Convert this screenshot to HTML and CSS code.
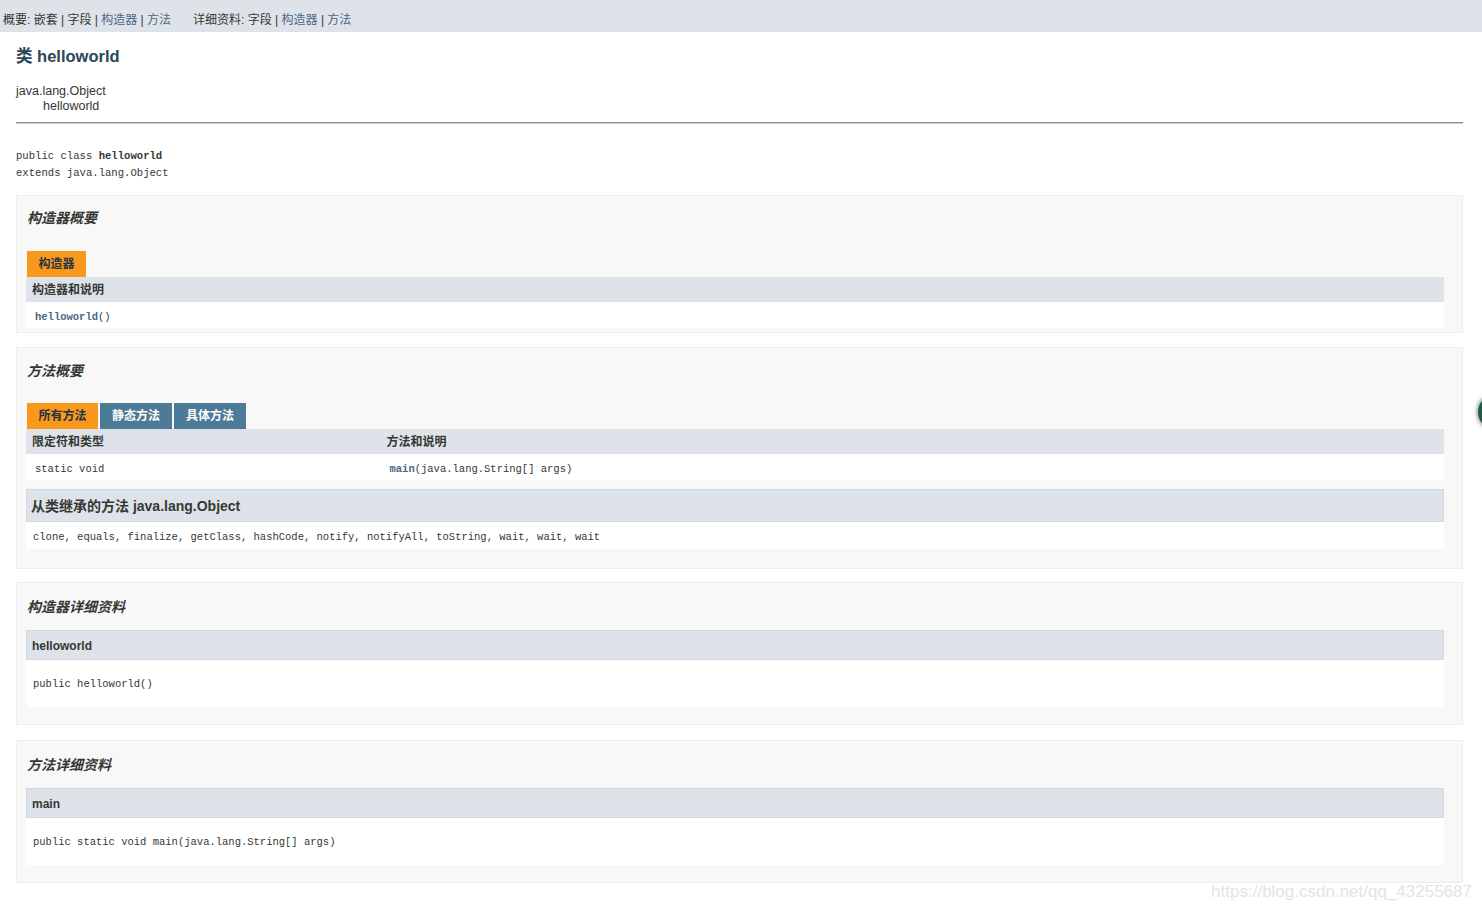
FILE: index.html
```html
<!DOCTYPE html>
<html lang="zh-CN">
<head>
<meta charset="utf-8">
<title>helloworld</title>
<link rel="stylesheet" href="styles.css">
</head>
<body>
<div class="subnav">
  <span class="navgroup">概要:&nbsp;嵌套&nbsp;|&nbsp;字段&nbsp;|&nbsp;<a class="link">构造器</a>&nbsp;|&nbsp;<a class="link">方法</a></span>
  <span class="navgroup">详细资料:&nbsp;字段&nbsp;|&nbsp;<a class="link">构造器</a>&nbsp;|&nbsp;<a class="link">方法</a></span>
</div>
<div class="content">
  <h2 class="title">类 helloworld</h2>
  <div class="inherit">
    <div>java.lang.Object</div>
    <div class="child">helloworld</div>
  </div>
  <div class="rule"></div>
  <pre class="decl">public class <b>helloworld</b>
extends java.lang.Object</pre>

  <section class="block summary">
    <h3>构造器概要</h3>
    <div class="tabs"><span class="tab active">构造器</span></div>
    <div class="table one">
      <div class="th">构造器和说明</div>
      <div class="td"><span class="code"><b class="link">helloworld</b>()</span></div>
    </div>
  </section>

  <section class="block summary methods">
    <h3>方法概要</h3>
    <div class="tabs">
      <span class="tab active">所有方法</span>
      <span class="tab">静态方法</span>
      <span class="tab">具体方法</span>
    </div>
    <div class="table two">
      <div class="th">限定符和类型</div>
      <div class="th">方法和说明</div>
      <div class="td"><span class="code">static void</span></div>
      <div class="td"><span class="code"><b class="link">main</b>(java.lang.String[] args)</span></div>
    </div>
    <div class="inherited">
      <h4 class="inh-head">从类继承的方法 java.lang.Object</h4>
      <div class="inh-body"><span class="code">clone, equals, finalize, getClass, hashCode, notify, notifyAll, toString, wait, wait, wait</span></div>
    </div>
  </section>

  <section class="block detail">
    <h3>构造器详细资料</h3>
    <h4 class="det-head">helloworld</h4>
    <div class="det-body"><pre class="code">public helloworld()</pre></div>
  </section>

  <section class="block detail last">
    <h3>方法详细资料</h3>
    <h4 class="det-head">main</h4>
    <div class="det-body"><pre class="code">public static void main(java.lang.String[] args)</pre></div>
  </section>
</div>
<div class="widget"></div>
<div class="watermark">https://blog.csdn.net/qq_43255687</div>
</body>
</html>
```
FILE: styles.css
```css
html, body {
  margin: 0;
  padding: 0;
}
body {
  position: relative;
  height: 910px;
  overflow: hidden;
  background: #ffffff;
  color: #353833;
  font-family: "Liberation Sans", "Noto Sans CJK SC", sans-serif;
  font-size: 12px;
}
.link {
  color: #4a6782;
  text-decoration: none;
}
.subnav {
  box-sizing: border-box;
  height: 32px;
  padding: 13px 0 0 3px;
  background: #dee3e9;
  display: flex;
  gap: 22px;
  font-size: 12px;
  line-height: 14px;
  color: #353833;
}
.content {
  padding: 0 19px 0 16px;
}
.title {
  margin: 14px 0 0;
  font-size: 16.5px;
  line-height: 20px;
  font-weight: bold;
  color: #2c4557;
}
.inherit {
  margin-top: 18px;
  font-size: 12.5px;
  line-height: 15px;
  color: #353833;
}
.inherit .child {
  padding-left: 27px;
}
.rule {
  margin-top: 8px;
  border-top: 1px solid #8f8f8f;
  border-bottom: 1px solid #cfcfcf;
}
.decl {
  margin: 24px 0 0;
  font-family: "Liberation Mono", "Noto Sans CJK SC", monospace;
  font-size: 10.6px;
  line-height: 17px;
  color: #353833;
}
.code {
  font-family: "Liberation Mono", "Noto Sans CJK SC", monospace;
  font-size: 10.5px;
  margin: 0;
}
.block {
  margin-top: 13px;
  border: 1px solid #ededed;
  background: #f8f8f8;
  padding: 0 18px 4px 9px;
}
.block h3 {
  margin: 13px 0 0 1px;
  font-size: 14px;
  line-height: 18px;
  font-style: italic;
  font-weight: bold;
  color: #353833;
}
.methods {
  margin-top: 14px;
  padding-bottom: 19px;
}
.methods h3 {
  margin-top: 14px;
}
.tabs {
  margin: 24px 0 0 1px;
  display: flex;
  gap: 2px;
}
.methods .tabs {
  margin-top: 23px;
}
.tab {
  height: 26px;
  line-height: 26px;
  padding: 0 12px;
  background: #4d7a97;
  color: #ffffff;
  font-weight: bold;
  font-size: 12px;
}
.tab.active {
  background: #f8981d;
  color: #253441;
  padding: 0 11.5px;
}
.table {
  display: grid;
}
.table.one {
  grid-template-columns: 1fr;
}
.table.two {
  grid-template-columns: 25% 1fr;
}
.th {
  height: 23px;
  line-height: 23px;
  padding: 2px 0 0 6px;
  background: #dee3e9;
  font-weight: bold;
  font-size: 12px;
  color: #353833;
}
.td {
  height: 24px;
  line-height: 24px;
  padding: 2px 0 0 9px;
  background: #ffffff;
}
.inherited {
  margin-top: 9px;
}
.inh-head {
  margin: 0;
  height: 30px;
  line-height: 30px;
  padding: 1px 0 0 4px;
  border: 1px solid #d0d9e0;
  background: #dee3e9;
  font-size: 14px;
  font-weight: bold;
  color: #353833;
}
.inh-body {
  height: 26px;
  line-height: 26px;
  padding: 1px 0 0 7px;
  background: #ffffff;
}
.detail {
  margin-top: 13px;
  padding-bottom: 17px;
}
.detail.last {
  margin-top: 15px;
}
.detail h3 {
  margin-top: 15px;
}
.det-head {
  margin: 14px 0 0;
  height: 26px;
  line-height: 26px;
  padding: 2px 0 0 5px;
  border: 1px solid #d0d9e0;
  background: #dee3e9;
  font-size: 12px;
  font-weight: bold;
  color: #353833;
}
.det-body {
  background: #ffffff;
  padding: 16px 0 14px 7px;
}
.det-body .code {
  line-height: 17px;
}
.widget {
  position: absolute;
  left: 1476px;
  top: 392px;
  width: 36px;
  height: 36px;
  border-radius: 50%;
  border: 2px solid #c8c8c8;
  background: #1f5a4a;
  box-shadow: 0 0 4px rgba(0, 0, 0, 0.2);
}
.watermark {
  position: absolute;
  right: 10px;
  top: 882px;
  font-family: "Liberation Sans", sans-serif;
  font-size: 17px;
  line-height: 20px;
  color: #e4e4e4;
}
```
